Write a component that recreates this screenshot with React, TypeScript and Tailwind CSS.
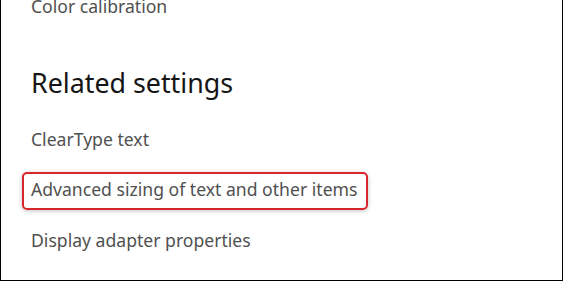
export default function App() {
  return (
    <div
      className="w-[563px] h-[282px] bg-white overflow-hidden"
      style={{ fontFamily: '"Noto Sans", "Open Sans", sans-serif' }}
    >
      <div className="relative w-[563px] h-[281px] border-l border-r border-b border-black box-border">
        <div className="flex flex-col pl-[30px] items-start">
          <div className="mt-[-4px] h-[20px] leading-[20px] text-[17.6px] text-[#505050]">
            Color calibration
          </div>
          <div className="mt-[50px] h-[34px] leading-[34px] text-[26.8px] text-[#151515]">
            Related settings
          </div>
          <div className="mt-[29px] h-[20px] leading-[20px] text-[17.6px] text-[#505050]">
            ClearType text
          </div>
          <div className="mt-[23px] ml-[-9px] h-[38px] w-[346px] rounded-[5px] border-2 border-[#d8262e] pl-[7px] shadow-[0_1px_4px_rgba(0,0,0,0.25)]">
            <div className="mt-[5px] h-[20px] leading-[20px] text-[17.6px] text-[#505050]">
              Advanced sizing of text and other items
            </div>
          </div>
          <div className="mt-[20px] h-[20px] leading-[20px] text-[17.6px] text-[#505050]">
            Display adapter properties
          </div>
        </div>
      </div>
    </div>
  );
}
